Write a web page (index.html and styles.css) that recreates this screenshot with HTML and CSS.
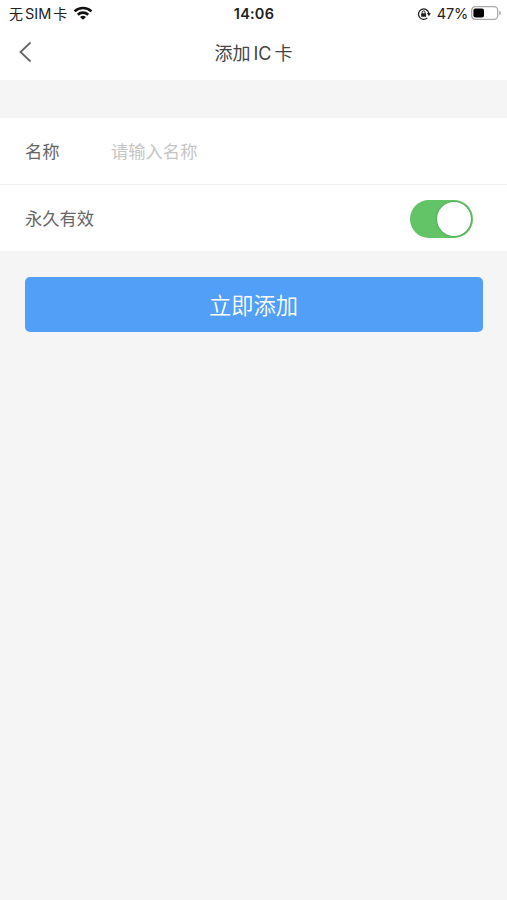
FILE: index.html
```html
<!DOCTYPE html>
<html lang="zh-CN">
<head>
<meta charset="utf-8">
<meta name="viewport" content="width=device-width, initial-scale=1">
<title>添加IC卡</title>
<link rel="stylesheet" href="styles.css">
</head>
<body>
<div class="status">
  <div class="carrier">
    <span>无</span><span class="sim">SIM</span><span>卡</span>
    <svg class="wifi" width="20" height="15" viewBox="0 0 20 15" fill="none" stroke="#111" stroke-width="2.6">
      <path d="M1.6 5.4C6.2 .9 13.8 .9 18.4 5.4"/>
      <path d="M4.8 8.7C7.7 5.9 12.3 5.9 15.2 8.7"/>
      <path d="M10 13.8 7 10.9Q10 8.5 13 10.9Z" fill="#111" stroke="none"/>
    </svg>
  </div>
  <div class="time">14:06</div>
  <div class="power">
    <svg class="lock" width="14" height="14" viewBox="0 0 14 14" fill="none" stroke="#222" stroke-width="1.3">
      <path d="M11.8 6.2A5.2 5.2 0 1 0 10.3 10.9"/>
      <path d="m9.8 6 2.2 3.2L13.8 6Z" fill="#222" stroke="none"/>
      <rect x="4.1" y="6.3" width="5" height="3.5" rx=".6" fill="#222" stroke="none"/>
      <path d="M5.2 6.5V5.3a1.4 1.4 0 0 1 2.8 0v1.2" stroke-width="1"/>
    </svg>
    <span class="percent">47%</span>
    <svg class="battery" width="31" height="14" viewBox="0 0 31 14">
      <rect x=".7" y=".7" width="26" height="12.6" rx="3.6" fill="#fff" stroke="#aaa" stroke-width="1.3"/>
      <rect x="2.4" y="2.4" width="10.6" height="9.2" rx="2" fill="#000"/>
      <path d="M28.3 4.8Q30 5.2 30 7T28.3 9.2Z" fill="#aaa"/>
    </svg>
  </div>
</div>
<header class="nav">
  <svg class="back" width="14" height="22" viewBox="0 0 14 22" fill="none" stroke="#666" stroke-width="1.8"><path d="M12.5 1.5 2.5 11l10 9.5"/></svg>
  <h1 class="title"><span>添加</span><span class="latin">IC</span><span>卡</span></h1>
</header>
<main>
  <section class="form">
    <div class="row"><label class="label" for="name">名称</label><input class="field" id="name" placeholder="请输入名称"></div>
    <div class="row"><span class="label">永久有效</span><span class="switch"><span class="knob"></span></span></div>
  </section>
  <button class="submit">立即添加</button>
</main>
</body>
</html>
```

FILE: styles.css
```css
* { box-sizing: border-box; }
body {
  margin: 0;
  min-height: 900px;
  background: #f5f5f5;
  font-family: Inter, "Noto Sans CJK SC", sans-serif;
}
.status {
  display: grid;
  grid-template-columns: 1fr auto 1fr;
  align-items: center;
  height: 27px;
  padding: 0 5px 0 9px;
  background: #fff;
  color: #222;
  font-size: 15px;
  line-height: 27px;
}
.carrier, .power { display: flex; align-items: center; }
.carrier { font-size: 14px; }
.sim { margin: 0 2px; font-size: 14.5px; }
.wifi { margin: -1px 0 0 6px; }
.time { margin-right: 3px; font-size: 14.5px; font-weight: 600; letter-spacing: .2px; }
.power { justify-content: flex-end; }
.percent { margin: 0 3px 0 6px; font-size: 14.5px; letter-spacing: -.2px; }
.battery { margin-top: -1px; }
.nav {
  display: grid;
  grid-template-columns: 1fr auto 1fr;
  align-items: center;
  height: 53px;
  padding: 0 18px;
  background: #fff;
}
.back { margin-top: -3px; }
.title {
  display: flex;
  margin: 0;
  color: #444;
  font-size: 18px;
  font-weight: 400;
  line-height: 26px;
}
.latin { margin: 0 3px; }
.form { margin-top: 38px; background: #fff; }
.row {
  display: flex;
  align-items: center;
  height: 66px;
  padding: 0 34px 0 25px;
}
.row:first-child { height: 67px; border-bottom: 1px solid #eee; }
.label {
  width: 86px;
  padding-bottom: 1px;
  color: #666;
  font-size: 17.3px;
}
.field {
  flex: 1;
  min-width: 0;
  padding: 1px 0 0;
  border: 0;
  outline: 0;
  background: none;
  font: inherit;
  font-size: 17.3px;
}
.field::placeholder { color: #c5c5c5; opacity: 1; }
.switch {
  display: flex;
  justify-content: flex-end;
  width: 63px;
  height: 38px;
  margin: 1px 0 0 auto;
  padding: 2px;
  border-radius: 19px;
  background: #62c466;
}
.knob {
  width: 34px;
  height: 34px;
  border-radius: 50%;
  background: #fff;
  box-shadow: 0 0 2px rgba(0, 0, 0, .35);
}
.submit {
  display: block;
  width: 458px;
  height: 55px;
  margin: 26px 0 0 25px;
  padding: 0 1px 2px 0;
  border: 0;
  border-radius: 5px;
  background: #529ff7;
  color: #fff;
  font: inherit;
  font-size: 22.3px;
  font-weight: 350;
}
```
